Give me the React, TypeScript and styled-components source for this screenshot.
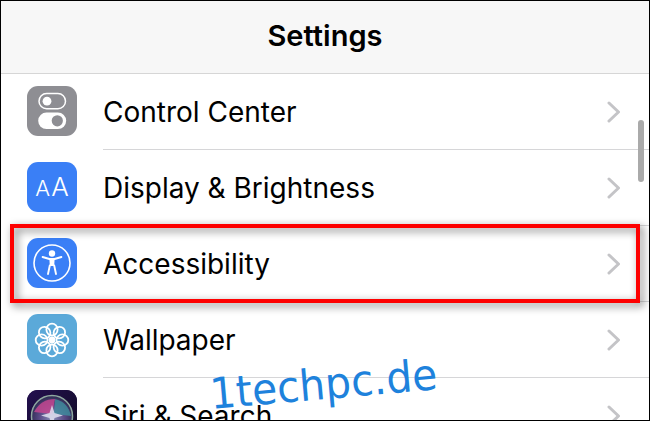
import styled, { createGlobalStyle } from "styled-components";
import { ReactNode } from "react";

const GlobalStyle = createGlobalStyle`
  html, body {
    margin: 0;
    padding: 0;
    background: #fff;
  }
`;

const ControlCenterIcon = () => (
  <svg width="50" height="50" viewBox="0 0 50 50">
    <rect x="12" y="7.6" width="26.5" height="15.2" rx="7.6" fill="none" stroke="#fff" strokeWidth="1.5" />
    <circle cx="20" cy="15.2" r="4.4" fill="#fff" />
    <rect x="11.2" y="26.5" width="28" height="16.6" rx="8.3" fill="#fff" />
    <circle cx="30.3" cy="34.8" r="5.6" fill="#8e8e93" />
  </svg>
);

const DisplayIcon = () => (
  <AaMark>
    <SmallA>A</SmallA>
    <BigA>A</BigA>
  </AaMark>
);

const AccessibilityIcon = () => (
  <svg width="50" height="50" viewBox="0 0 50 50">
    <circle cx="25" cy="25" r="18" fill="none" stroke="#fff" strokeWidth="1.6" />
    <circle cx="25" cy="15.5" r="3.2" fill="#fff" />
    <path d="M22.4 21 H27.6 L27.2 28 H22.8 Z" fill="#fff" />
    <path
      d="M15.6 19 L22.4 21 H27.6 L34.4 19 M22.8 27.5 L21 36 M27.2 27.5 L29 36"
      fill="none"
      stroke="#fff"
      strokeWidth="1.9"
      strokeLinecap="round"
      strokeLinejoin="round"
    />
  </svg>
);

const WallpaperIcon = () => {
  const angles = [0, 45, 90, 135, 180, 225, 270, 315];
  return (
    <svg width="50" height="50" viewBox="0 0 50 50">
      <g fill="none" stroke="#fff" strokeWidth="1.8" transform="translate(25 26)">
        {angles.map((a) => (
          <ellipse key={a} cx="0" cy="-10.4" rx="5.6" ry="5.9" transform={`rotate(${a})`} />
        ))}
      </g>
      <circle cx="25" cy="26" r="3.4" fill="#fff" />
    </svg>
  );
};

const SiriIcon = () => (
  <svg width="50" height="50" viewBox="0 0 50 50">
    <defs>
      <linearGradient id="siriBack" x1="0" y1="0" x2="1" y2="1">
        <stop offset="0" stopColor="#241050" />
        <stop offset="1" stopColor="#0f0b20" />
      </linearGradient>
      <radialGradient id="siriOrb" cx="0.5" cy="0.55" r="0.55">
        <stop offset="0" stopColor="#8a90b8" />
        <stop offset="0.55" stopColor="#5a4a86" />
        <stop offset="1" stopColor="#2c2a50" />
      </radialGradient>
    </defs>
    <rect width="50" height="50" fill="url(#siriBack)" />
    <circle cx="25" cy="26" r="20.5" fill="url(#siriOrb)" stroke="#8fa8a0" strokeWidth="1.5" />
    <path d="M7 22 Q14 9 28 9 L25 24 Z" fill="#c2478f" opacity="0.85" />
    <path d="M28 9 Q41 12 44 26 L27 24 Z" fill="#3f8f9f" opacity="0.8" />
    <path d="M25 15 L27.5 23 L36 25.5 L27.5 28 L25 37 L22.5 28 L14 25.5 L22.5 23 Z" fill="#e0e0f0" opacity="0.85" />
  </svg>
);

const rows: { label: string; color: string; icon: () => ReactNode }[] = [
  { label: "Control Center", color: "#8e8e93", icon: ControlCenterIcon },
  { label: "Display & Brightness", color: "#3a7ff6", icon: DisplayIcon },
  { label: "Accessibility", color: "#3a7ff6", icon: AccessibilityIcon },
  { label: "Wallpaper", color: "#5ba9d9", icon: WallpaperIcon },
  { label: "Siri & Search", color: "#1b0c3c", icon: SiriIcon },
];

const App = () => {
  return (
    <>
      <GlobalStyle />
      <Frame>
        <Header>Settings</Header>
        {rows.map((row) => (
          <Row key={row.label}>
            <IconTile $color={row.color}>{row.icon()}</IconTile>
            <RowBody>
              <Label>{row.label}</Label>
              <Chevron width="14" height="22" viewBox="0 0 14 22">
                <path d="M2 2 L11.5 11 L2 20" fill="none" stroke="#c4c4c7" strokeWidth="3" strokeLinecap="round" strokeLinejoin="round" />
              </Chevron>
            </RowBody>
          </Row>
        ))}
        <Scrollbar />
        <Highlight />
        <Watermark>1techpc.de</Watermark>
      </Frame>
    </>
  );
};

export default App;

const Frame = styled.div`
  position: relative;
  box-sizing: border-box;
  width: 650px;
  height: 421px;
  overflow: hidden;
  background: #fff;
  border: 1px solid #000;
  font-family: Inter, "Liberation Sans", sans-serif;
  color: #000;
`;

const Header = styled.div`
  box-sizing: border-box;
  height: 73px;
  display: flex;
  align-items: center;
  justify-content: center;
  padding-bottom: 3px;
  background: #f7f7f7;
  border-bottom: 1px solid #d6d6d6;
  font-size: 29px;
  font-weight: 600;
`;

const Row = styled.div`
  display: flex;
  gap: 26px;
  height: 76px;
  padding-left: 26px;
`;

const IconTile = styled.div<{ $color: string }>`
  flex: none;
  width: 50px;
  height: 50px;
  margin-top: 12px;
  border-radius: 11px;
  overflow: hidden;
  display: flex;
  align-items: center;
  justify-content: center;
  background: ${({ $color }) => $color};
  color: #fff;
`;

const AaMark = styled.div`
  display: flex;
  align-items: baseline;
  gap: 1px;
  padding-bottom: 2px;
  font-weight: 300;
`;

const SmallA = styled.span`
  font-size: 22px;
`;

const BigA = styled.span`
  font-size: 26px;
`;

const RowBody = styled.div`
  flex: 1;
  box-sizing: border-box;
  display: flex;
  align-items: center;
  justify-content: space-between;
  padding-right: 28px;
  border-bottom: 1px solid #d6d6d8;
`;

const Label = styled.span`
  padding-top: 1px;
  font-size: 28px;
  font-weight: 400;
  white-space: nowrap;
`;

const Chevron = styled.svg`
  flex: none;
`;

const Scrollbar = styled.div`
  position: absolute;
  left: 637px;
  top: 119px;
  width: 6px;
  height: 62px;
  border-radius: 3px;
  background: #aaaaaa;
`;

const Highlight = styled.div`
  position: absolute;
  left: 9px;
  top: 223px;
  box-sizing: border-box;
  width: 630px;
  height: 79px;
  border: 4px solid #fe0000;
  filter: drop-shadow(3px 3px 4px rgba(0, 0, 0, 0.55));
`;

const Watermark = styled.div`
  position: absolute;
  left: 209px;
  top: 367px;
  font-family: "DejaVu Sans", sans-serif;
  font-size: 43px;
  line-height: 52px;
  color: #1e82dc;
  white-space: nowrap;
  transform-origin: left center;
  transform: rotate(-5deg) scaleX(0.95);
`;
